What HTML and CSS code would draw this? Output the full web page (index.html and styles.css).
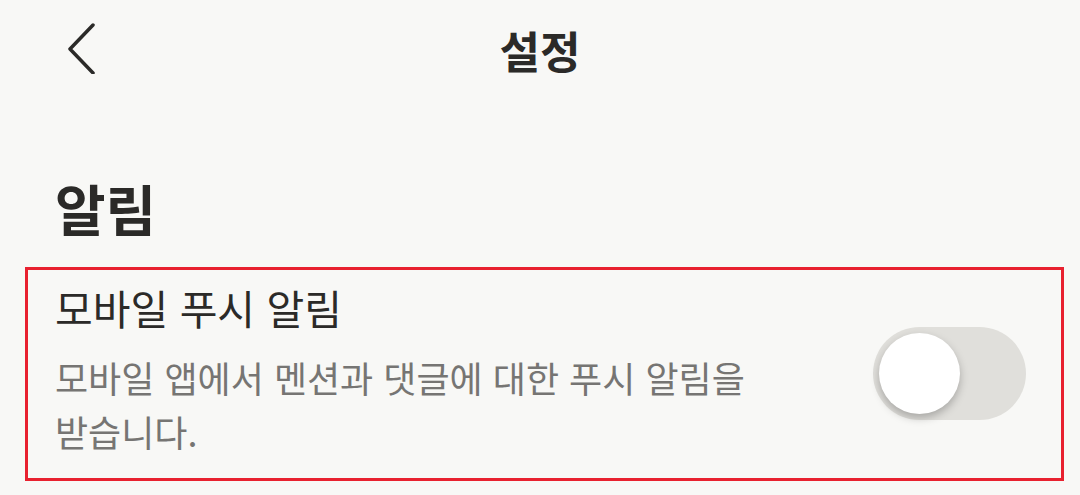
FILE: index.html
```html
<!DOCTYPE html>
<html lang="ko">
<head>
<meta charset="utf-8">
<link rel="stylesheet" href="styles.css">
</head>
<body>
<header class="topbar">
  <button class="back" aria-label="뒤로">
    <svg width="32" height="52" viewBox="0 0 32 52"><path d="M27 3 L4 27 L27 51" fill="none" stroke="#2b2a28" stroke-width="3.5" stroke-linecap="round" stroke-linejoin="round"/></svg>
  </button>
  <h1 class="title">설정</h1>
</header>
<main class="content">
  <h2 class="section">알림</h2>
  <div class="item">
    <div class="texts">
      <div class="item-title">모바일 푸시 알림</div>
      <div class="item-desc">모바일 앱에서 멘션과 댓글에 대한 푸시 알림을 받습니다.</div>
    </div>
    <div class="switch"><div class="knob"></div></div>
  </div>
</main>
</body>
</html>
```
FILE: styles.css
```css
html, body {
  margin: 0;
  padding: 0;
  background: #f8f8f6;
  font-family: "Noto Sans CJK KR", "Noto Sans", sans-serif;
  color: #2b2a28;
}
.topbar {
  position: relative;
  height: 100px;
  display: flex;
  align-items: center;
  justify-content: center;
}
.back {
  position: absolute;
  left: 66px;
  top: 22px;
  background: none;
  border: 0;
  padding: 0;
  width: 32px;
  height: 54px;
}
.title {
  margin: 0;
  font-size: 44px;
  font-weight: 700;
  line-height: 1;
}
.content {
  padding: 0 16px 0 25px;
}
.section {
  margin: 76px 0 0 30px;
  font-size: 55px;
  font-weight: 700;
  line-height: 62px;
}
.item {
  margin-top: 29px;
  width: 1033px;
  height: 208px;
  border: 3px solid #e8212f;
  display: flex;
  align-items: flex-start;
}
.texts {
  padding: 9px 0 0 27px;
  width: 730px;
  word-break: keep-all;
}
.item-title {
  font-size: 41px;
  line-height: 56px;
  color: #2b2a28;
}
.item-desc {
  margin-top: 15px;
  font-size: 36px;
  line-height: 54px;
  color: #767573;
}
.switch {
  margin: 57px 35px 0 auto;
  flex: none;
  width: 153px;
  height: 93px;
  border-radius: 47px;
  background: #e0dfdb;
  position: relative;
}
.knob {
  position: absolute;
  left: 6px;
  top: 6px;
  width: 81px;
  height: 81px;
  border-radius: 50%;
  background: #fff;
  box-shadow: 0 4px 8px rgba(0,0,0,0.25);
}
```
